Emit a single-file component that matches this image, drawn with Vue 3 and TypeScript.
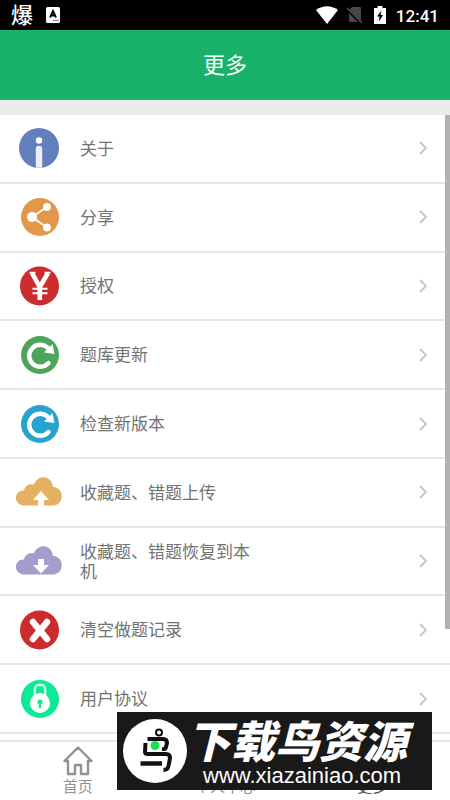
<script setup lang="ts">
interface MenuItem {
  label: string
  icon: 'info' | 'share' | 'yen' | 'refresh' | 'upload' | 'download' | 'clear' | 'lock'
  color: string
}

const items: MenuItem[] = [
  { label: '关于', icon: 'info', color: '#617fba' },
  { label: '分享', icon: 'share', color: '#e2974a' },
  { label: '授权', icon: 'yen', color: '#cc2c2d' },
  { label: '题库更新', icon: 'refresh', color: '#4fa45c' },
  { label: '检查新版本', icon: 'refresh', color: '#27a3d0' },
  { label: '收藏题、错题上传', icon: 'upload', color: '#e4b163' },
  { label: '收藏题、错题恢复到本机', icon: 'download', color: '#a49ccb' },
  { label: '清空做题记录', icon: 'clear', color: '#cc2c2d' },
  { label: '用户协议', icon: 'lock', color: '#0fe896' },
]
</script>

<template>
  <div class="page">
    <div class="status">
      <div class="status-group">
        <span class="status-app">爆</span>
        <svg class="status-a" viewBox="0 0 14 16" aria-hidden="true">
          <rect width="14" height="16" rx="1.500" fill="#fff" />
          <path d="M4 10.500 7 4l3 6.500M5 8.500h4" fill="none" stroke="#000" stroke-width="1.800" />
          <path d="M7 13.500h6" stroke="#555" stroke-width="1" stroke-dasharray="1.500 .7" />
        </svg>
      </div>
      <div class="status-group">
        <svg width="22" height="18" viewBox="0 0 22 18" aria-hidden="true">
          <path d="M0 4Q11-3.500 22 4L11 18Z" fill="#fff" />
        </svg>
        <svg class="sim" width="17" height="18" viewBox="0 0 17 18" aria-hidden="true">
          <path d="M3 4 6 1h8q1 0 1 1v14H3Z" fill="#484848" />
          <path d="M0 2 16 18" stroke="#000" stroke-width="3" />
          <path d="M1 2 16 17" stroke="#555" stroke-width="1.300" />
        </svg>
        <svg class="battery" width="12" height="18" viewBox="0 0 12 18" aria-hidden="true">
          <path d="M0 2h3.500V0h5v2H12v16H0Z" fill="#fff" />
          <path d="M7.500 4.500 3 10.500h2.500L5 15.500l4-6.500H6.500Z" fill="#000" />
        </svg>
        <span class="clock">12:41</span>
      </div>
    </div>

    <header class="header"><h1>更多</h1></header>

    <main class="content">
      <ul class="list">
        <li v-for="item in items" :key="item.label" class="row">
          <button type="button" class="row-button">
            <svg class="icon" viewBox="0 0 48 44" :style="{ color: item.color }" aria-hidden="true">
              <template v-if="item.icon === 'info'">
                <circle cx="24" cy="22" r="20" fill="currentColor" />
                <circle cx="24" cy="14.500" r="3.200" fill="#fff" />
                <path d="M20.800 41.800V23q0-3.200 3.200-3.200t3.200 3.200v18.800Z" fill="#eceff7" />
              </template>
              <template v-else-if="item.icon === 'share'">
                <circle cx="25" cy="22" r="19" fill="currentColor" />
                <path d="M32 12 17 22l15 10.500" fill="none" stroke="#fff" stroke-width="1.800" />
                <circle cx="17" cy="22" r="5" fill="#fff" />
                <circle cx="32" cy="12" r="3.900" fill="#fff" />
                <circle cx="32" cy="32.500" r="3.900" fill="#fff" />
              </template>
              <template v-else-if="item.icon === 'yen'">
                <circle cx="24.500" cy="22" r="19.500" fill="currentColor" />
                <path d="M17 9 24.800 23 33 9M24.800 21v15" fill="none" stroke="#fff" stroke-width="4.600" />
                <path d="M17.500 24.800h15M17.500 29.300h15" stroke="#fff" stroke-width="2" />
                <path d="M14.500 8.700h6M29.500 8.700h6" stroke="#fff" stroke-width="1.800" />
              </template>
              <template v-else-if="item.icon === 'refresh'">
                <circle cx="25" cy="22" r="19" fill="currentColor" />
                <path d="M33 15A11 11 0 1 0 33.500 30" fill="none" stroke="#fff" stroke-width="4.400" stroke-linecap="round" />
                <path d="M37.500 11 39.500 21 29 19.500Z" fill="#fff" />
              </template>
              <template v-else-if="item.icon === 'upload' || item.icon === 'download'">
                <path d="M8 35.500C-2 34-1 20 9 20.500C10 15 15 13.500 19 14.500C22 5 36 4 38 17C49 17 50 34 39 35.500Z" fill="currentColor" />
                <path v-if="item.icon === 'upload'" d="M26 21 34 30h-5v6h-6v-6h-5Z" fill="#fff" />
                <path v-else d="M23 20h6v6h5l-8 8.500-8-8.500h5Z" fill="#fff" />
              </template>
              <template v-else-if="item.icon === 'clear'">
                <circle cx="24.500" cy="22" r="19.500" fill="currentColor" />
                <path d="m18 14 14 17M32 14 18 31" stroke="#fff" stroke-width="6.500" stroke-linecap="round" />
              </template>
              <template v-else>
                <circle cx="25" cy="22" r="19" fill="currentColor" />
                <path d="M19.800 18v-5q0-5.200 5.200-5.200t5.200 5.200v5" fill="none" stroke="#c6fbe6" stroke-width="2.400" />
                <circle cx="25" cy="26" r="10" fill="#fff" />
                <circle cx="25" cy="25" r="2.600" fill="currentColor" />
                <path d="M25 25v6" stroke="currentColor" stroke-width="2" />
              </template>
            </svg>
            <span class="label">{{ item.label }}</span>
            <svg class="chevron" width="10" height="16" viewBox="0 0 10 16" aria-hidden="true">
              <path d="m2 2 6 6-6 6" fill="none" stroke="#c5c5c9" stroke-width="1.800" />
            </svg>
          </button>
        </li>
      </ul>
      <div class="scrollbar" aria-hidden="true"></div>
    </main>

    <nav class="tabs">
      <a href="#home" class="tab">
        <svg class="home" width="32" height="32" viewBox="0 0 32 32" aria-hidden="true">
          <path d="M16 2.500 2.500 16H6v13h7v-9h6v9h7V16h3.500Z" fill="none" stroke="#929295" stroke-width="2.400" stroke-linejoin="round" />
        </svg>
        <span>首页</span>
      </a>
      <a href="#me" class="tab"><span>个人中心</span></a>
      <a href="#more" class="tab active"><span>更多</span></a>
    </nav>

    <div class="banner">
      <svg class="bird" viewBox="0 0 64 64" aria-hidden="true">
        <circle cx="32" cy="32" r="32" fill="#fff" />
        <circle cx="36" cy="13.500" r="3" fill="none" stroke="#111" stroke-width="2" />
        <path d="M24.500 20H40q4 0 4 4l-1 4q-.5 2.500-4 2" fill="none" stroke="#111" stroke-width="4" />
        <path d="M22.500 24l-.5 9q0 2 3 2h18q4 0 4 4l-1.500 8q-.7 4-5 4" fill="none" stroke="#111" stroke-width="4" />
        <path d="M17.500 44.500H39" stroke="#111" stroke-width="4.500" />
        <circle cx="32" cy="26.500" r="4.500" fill="#23dc58" />
      </svg>
      <div class="banner-text">
        <strong>下载鸟资源</strong>
        <span>www.xiazainiao.com</span>
      </div>
    </div>
  </div>
</template>

<style>
body {
  margin: 0;
}
</style>

<style scoped>
.page {
  position: relative;
  display: flex;
  flex-direction: column;
  min-height: 100vh;
  background: #fff;
  color: #737373;
  font-family: Roboto, "Noto Sans CJK SC", sans-serif;
}

.status {
  display: flex;
  justify-content: space-between;
  align-items: center;
  height: 30px;
  padding: 0 11px;
  background: #000;
  color: #fff;
}

.status-group {
  display: flex;
  align-items: center;
}

.status-app {
  font-size: 22px;
  line-height: 28px;
  padding-top: 2px;
  font-weight: 500;
}

.status-a {
  width: 14px;
  height: 16px;
  margin-left: 13px;
}

.sim {
  margin-left: 8px;
}

.battery {
  margin-left: 11px;
}

.clock {
  margin-left: 10px;
  font-size: 17px;
  font-weight: 500;
  line-height: 28px;
  padding-top: 2px;
}

.header {
  display: flex;
  align-items: center;
  justify-content: center;
  box-sizing: border-box;
  height: 70px;
  padding-top: 2px;
  background: #17b169;
  color: #fff;
}

h1 {
  margin: 0;
  font-size: 22px;
  font-weight: 400;
  line-height: 32px;
}

.content {
  position: relative;
  display: flex;
  flex: 1;
  flex-direction: column;
  border-top: 15px solid #ebebeb;
}

.list {
  display: flex;
  flex: 1;
  flex-direction: column;
  margin: 0;
  padding: 0;
  list-style: none;
}

.row {
  display: flex;
  flex: 1;
  border-bottom: 2px solid #e6e6e6;
}

.row-button {
  display: flex;
  flex: 1;
  align-items: center;
  padding: 0 22px 0 15px;
  border: 0;
  background: none;
  color: inherit;
  font: inherit;
  text-align: left;
}

.icon {
  flex: none;
  width: 48px;
  height: 44px;
}

.label {
  width: 180px;
  margin-left: 17px;
  padding-top: 1px;
  font-size: 17px;
  line-height: 20px;
}

.chevron {
  margin-left: auto;
}

.scrollbar {
  position: absolute;
  top: 0;
  right: 0;
  width: 5px;
  height: 83%;
  background: #b1b1b1;
}

.tabs {
  display: flex;
  height: 58px;
  margin-top: 6px;
  padding: 0 4px;
  border-top: 2px solid #e6e6e6;
}

.tab {
  display: flex;
  flex: 1;
  flex-direction: column;
  align-items: center;
  justify-content: flex-end;
  padding-bottom: 3px;
  color: #929292;
  font-size: 15px;
  line-height: 20px;
  text-decoration: none;
}

.active {
  color: #555;
}

.banner {
  position: absolute;
  right: 18px;
  bottom: 10px;
  display: flex;
  align-items: center;
  box-sizing: border-box;
  width: 315px;
  height: 78px;
  padding-left: 6px;
  background: #191919;
  color: #fff;
}

.bird {
  flex: none;
  width: 64px;
  height: 64px;
}

.banner-text {
  display: flex;
  flex-direction: column;
  padding-top: 8px;
}

.banner-text strong {
  font-size: 44px;
  font-style: italic;
  font-weight: 900;
  line-height: 42px;
}

.banner-text span {
  padding-left: 16px;
  font-family: "Liberation Sans", sans-serif;
  font-size: 22px;
  line-height: 24px;
}
</style>
